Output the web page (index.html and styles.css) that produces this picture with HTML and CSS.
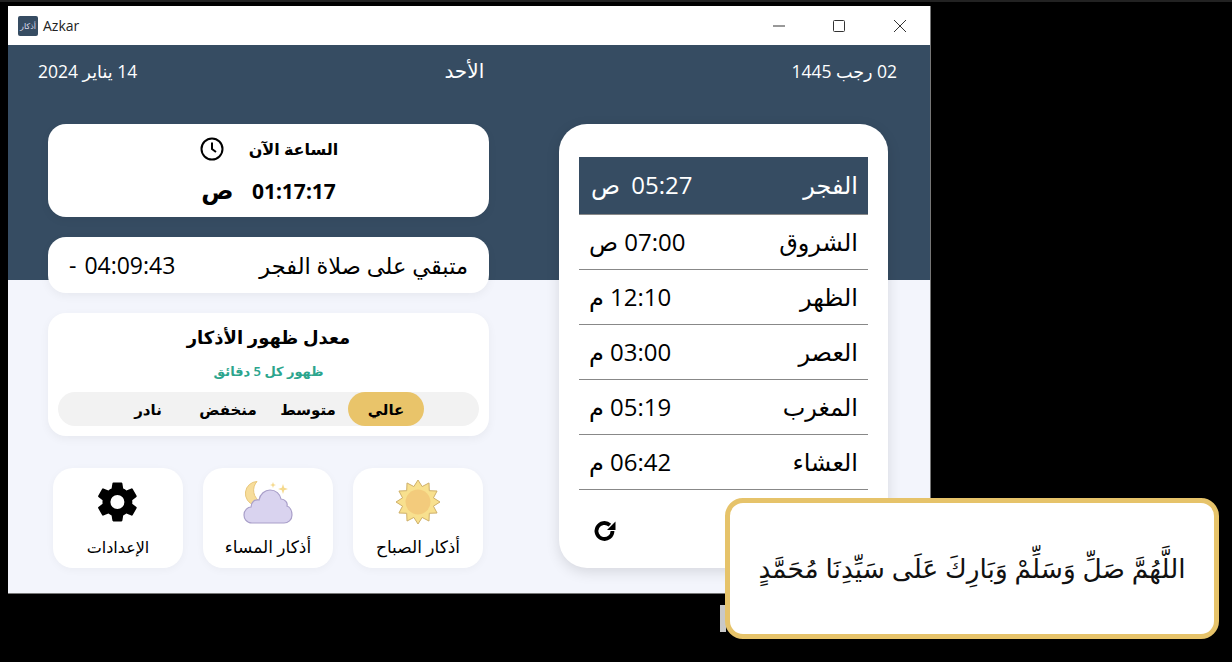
FILE: index.html
```html
<!DOCTYPE html>
<html lang="ar">
<head>
    <meta charset="UTF-8">
    <meta name="viewport" content="width=device-width, initial-scale=1.0">
    <title>Azkar</title>
    <link rel="stylesheet" href="styles.css">
</head>
<body>
    <div class="window">
        <div class="titlebar" dir="ltr">
            <div class="app-icon">أذكار</div>
            <span class="app-name">Azkar</span>
            <div class="win-controls">
                <svg width="12" height="12" viewBox="0 0 12 12"><path d="M0 6h12" stroke="#333" fill="none"/></svg>
                <svg width="12" height="12" viewBox="0 0 12 12"><rect x=".5" y=".5" width="11" height="11" rx="1" stroke="#333" fill="none"/></svg>
                <svg width="14" height="14" viewBox="0 0 14 14"><path d="M1 1l12 12M13 1L1 13" stroke="#333" fill="none"/></svg>
            </div>
        </div>
        <div class="content">
            <div class="dates">
                <span>02 رجب 1445</span>
                <span class="day">الأحد</span>
                <span>14 يناير 2024</span>
            </div>
            <div class="columns">
                <div class="prayers">
                    <div class="prayer-list">
                        <div class="prayer active"><span>الفجر</span><span>05:27 ص</span></div>
                        <div class="prayer"><span>الشروق</span><span>07:00 ص</span></div>
                        <div class="prayer"><span>الظهر</span><span>12:10 م</span></div>
                        <div class="prayer"><span>العصر</span><span>03:00 م</span></div>
                        <div class="prayer"><span>المغرب</span><span>05:19 م</span></div>
                        <div class="prayer"><span>العشاء</span><span>06:42 م</span></div>
                    </div>
                    <svg class="refresh" width="24" height="24" viewBox="0 0 24 24"><path d="M19.5 12a8 8 0 1 1-2.600-5.900" fill="none" stroke="#000" stroke-width="3.800"/><path d="M22.500 2.500v8.500h-8.500z" fill="#000"/></svg>
                </div>
                <div class="side">
                    <div class="card clock">
                        <div class="clock-title">
                            <span>الساعة الآن</span>
                            <svg width="26" height="26" viewBox="0 0 26 26"><circle cx="13" cy="13" r="10.500" fill="none" stroke="#000" stroke-width="2"/><path d="M13 6.500V13l4 3" fill="none" stroke="#000" stroke-width="2"/></svg>
                        </div>
                        <div class="clock-time"><span>01:17:17</span> <span class="ampm">ص</span></div>
                    </div>
                    <div class="card remaining">
                        <span>متبقي على صلاة الفجر</span>
                        <span class="remaining-time" dir="ltr">- 04:09:43</span>
                    </div>
                    <div class="card rate">
                        <div class="rate-title">معدل ظهور الأذكار</div>
                        <div class="rate-note">ظهور كل 5 دقائق</div>
                        <div class="rate-tabs">
                            <span class="tab selected">عالي</span>
                            <span class="tab">متوسط</span>
                            <span class="tab">منخفض</span>
                            <span class="tab">نادر</span>
                        </div>
                    </div>
                    <div class="actions">
                        <div class="action">
                            <div class="action-icon">
                                <svg width="44" height="44" viewBox="0 0 44 44">
                                    <polygon class="sun-rays" points="22,0 26.140,6.550 33,2.950 33.310,10.690 41.050,11 37.450,17.860 44,22 37.450,26.140 41.050,33 33.310,33.310 33,41.050 26.140,37.450 22,44 17.860,37.450 11,41.050 10.690,33.310 2.950,33 6.550,26.140 0,22 6.550,17.860 2.950,11 10.690,10.690 11,2.950 17.860,6.550"/>
                                    <circle cx="22" cy="22" r="12.500" fill="#f3cb7c"/>
                                </svg>
                            </div>
                            <span>أذكار الصباح</span>
                        </div>
                        <div class="action">
                            <div class="action-icon">
                                <svg width="50" height="44" viewBox="0 0 50 44">
                                    <path d="M14 1.500A12 12 0 0 0 11 25l7-3A13 13 0 0 1 14 1.500z" fill="#f7dd9b" stroke="#e8c77c"/>
                                    <path d="M9 43C3 43 1 38 1 35c0-5 4-8 7-8 0-5 4-8 8-7 1-6 6-10 11-10 6 0 10 4 11 9 4 0 7 4 6 7 3 1 5 5 5 9 0 5-4 8-8 8z" fill="#d9d3ef" stroke="#a99fc9" stroke-width="1.200"/>
                                    <path d="M40 4l1.200 3.800L45 9l-3.800 1.200L40 14l-1.200-3.800L35 9l3.800-1.200zM30 2l.8 2.200L33 5l-2.200.8L30 8l-.8-2.200L27 5l2.200-.8z" fill="#f5d98c"/>
                                </svg>
                            </div>
                            <span>أذكار المساء</span>
                        </div>
                        <div class="action settings">
                            <div class="action-icon">
                                <svg width="48" height="48" viewBox="0 0 24 24"><path d="M19.100 12.900a7 7 0 0 0 0-1.800l2.100-1.600a.5.5 0 0 0 .1-.6l-2-3.500a.5.5 0 0 0-.6-.2l-2.500 1a7.300 7.300 0 0 0-1.600-.9L14.200 2.700a.5.5 0 0 0-.5-.4H9.700a.5.500 0 0 0-.5.4l-.4 2.600a7.300 7.300 0 0 0-1.600.9l-2.500-1a.5.5 0 0 0-.6.200l-2 3.500a.5.500 0 0 0 .1.600l2.100 1.600a7 7 0 0 0 0 1.800l-2.100 1.600a.5.5 0 0 0-.1.600l2 3.500a.5.5 0 0 0 .6.2l2.500-1a7.300 7.300 0 0 0 1.600.9l.4 2.600a.5.500 0 0 0 .5.4h4a.5.500 0 0 0 .5-.4l.4-2.600a7.300 7.300 0 0 0 1.600-.9l2.500 1a.5.500 0 0 0 .6-.2l2-3.500a.5.500 0 0 0-.1-.6zM11.700 15.500a3.500 3.500 0 1 1 0-7 3.500 3.500 0 0 1 0 7z" fill="#000"/></svg>
                            </div>
                            <span>الإعدادات</span>
                        </div>
                    </div>
                </div>
            </div>
        </div>
    </div>
    <div class="sliver"></div>
    <div class="toast">اللَّهُمَّ صَلِّ وَسَلِّمْ وَبَارِكَ عَلَى سَيِّدِنَا مُحَمَّدٍ</div>
</body>
</html>
```

FILE: styles.css
```css
* {
    box-sizing: border-box;
}
html, body {
    margin: 0;
    height: 662px;
    overflow: hidden;
}
body {
    background: linear-gradient(#222 2px, #000 2px);
    position: relative;
    font-family: "Noto Sans", "DejaVu Sans", sans-serif;
    color: #000;
}
.window {
    position: absolute;
    left: 8px;
    top: 6px;
    width: 923px;
    height: 588px;
    background: #f3f5fc;
    display: flex;
    flex-direction: column;
    border-right: 1px solid #777;
    border-bottom: 1px solid #777;
}
.titlebar {
    height: 39px;
    background: #fff;
    display: flex;
    align-items: center;
    padding-left: 10px;
    flex-shrink: 0;
}
.app-icon {
    width: 20px;
    height: 20px;
    background: #364c62;
    color: #dde;
    font-size: 8px;
    border-radius: 2px;
    display: flex;
    align-items: center;
    justify-content: center;
    overflow: hidden;
}
.app-name {
    margin-left: 5px;
    font-family: "Open Sans", sans-serif;
    font-size: 14px;
    color: #222;
}
.win-controls {
    margin-left: auto;
    display: flex;
    align-items: center;
    gap: 48px;
    padding-right: 23px;
}
.content {
    flex: 1;
    background: linear-gradient(#364c62 235px, #f3f5fc 235px);
    padding: 0 33px 0 30px;
}
.dates {
    direction: rtl;
    display: flex;
    justify-content: space-between;
    height: 79px;
    padding-top: 14px;
    font-family: "Open Sans", "DejaVu Sans", sans-serif;
    font-size: 17.500px;
    line-height: 24px;
    color: #fff;
}
.day {
    font-size: 20px;
}
.columns {
    direction: rtl;
    display: flex;
    justify-content: space-between;
    padding-left: 10px;
    padding-right: 9px;
}
.prayers {
    width: 329px;
    height: 444px;
    background: #fff;
    border-radius: 28px;
    padding: 33px 20px 0;
    box-shadow: 0 4px 14px rgba(0, 0, 0, .12);
    position: relative;
}
.prayer {
    height: 55px;
    display: flex;
    justify-content: space-between;
    align-items: center;
    padding: 0 10px 2px;
    border-bottom: 1px solid #888;
    font-size: 24px;
    font-family: "Open Sans", "DejaVu Sans", sans-serif;
}
.prayer.active {
    height: 58px;
    padding-left: 12px;
    background: #364c62;
    color: #fff;
    word-spacing: 5px;
}
.refresh {
    display: block;
    margin: 29px auto 0 14px;
}
.side {
    width: 441px;
    display: flex;
    flex-direction: column;
    gap: 20px;
}
.card {
    background: #fff;
    border-radius: 18px;
    box-shadow: 0 3px 10px rgba(0, 0, 0, .05);
}
.clock {
    height: 93px;
    text-align: center;
    padding-top: 12px;
}
.clock-title {
    display: flex;
    justify-content: center;
    align-items: center;
    gap: 24px;
    font-size: 16px;
    font-weight: 700;
}
.clock-time {
    margin-top: 13px;
    font-size: 21px;
    line-height: 30px;
    font-weight: 700;
    word-spacing: 13px;
}
.ampm {
    font-size: 24px;
}
.remaining {
    height: 56px;
    display: flex;
    justify-content: space-between;
    align-items: center;
    padding: 0 21px;
    font-size: 22.500px;
    font-family: "Open Sans", "DejaVu Sans", sans-serif;
}
.remaining-time {
    font-size: 23px;
    word-spacing: 2px;
}
.rate {
    height: 123px;
    text-align: center;
    padding: 12px 10px 0;
}
.rate-title {
    font-size: 18px;
    line-height: 24px;
    font-weight: 700;
}
.rate-note {
    margin-top: 13px;
    font-size: 13px;
    line-height: 18px;
    font-weight: 600;
    color: #2ca58d;
}
.rate-tabs {
    margin-top: 12px;
    height: 34px;
    background: #f2f2f2;
    border-radius: 17px;
    display: flex;
    padding-right: 55px;
    font-size: 15px;
    font-weight: 600;
}
.tab {
    width: 80px;
    display: flex;
    align-items: center;
    justify-content: center;
    border-radius: 17px;
}
.tab.selected {
    width: 76px;
    background: #e9c46a;
}
.actions {
    margin-top: 12px;
    display: flex;
    justify-content: space-between;
    padding: 0 6px 0 5px;
}
.action {
    width: 130px;
    height: 100px;
    background: #fff;
    border-radius: 20px;
    box-shadow: 0 2px 8px rgba(0, 0, 0, .04);
    display: flex;
    flex-direction: column;
    align-items: center;
    padding-top: 11px;
    font-size: 17px;
    line-height: 22px;
}
.action span {
    margin-top: 11px;
}
.action-icon {
    height: 46px;
    display: flex;
    align-items: center;
    justify-content: center;
}
.settings {
    font-size: 16px;
}
.sun-rays {
    fill: #f8e08e;
    stroke: #cfb06a;
}
.sliver {
    position: absolute;
    left: 720px;
    top: 605px;
    width: 6px;
    height: 27px;
    background: #c8c8c8;
}
.toast {
    position: absolute;
    left: 725px;
    top: 498px;
    width: 494px;
    height: 141px;
    padding-bottom: 2px;
    background: #fff;
    border: 5px solid #e6c36a;
    border-radius: 18px;
    display: flex;
    align-items: center;
    justify-content: center;
    direction: rtl;
    font-size: 26.400px;
    color: #111;
}
```
